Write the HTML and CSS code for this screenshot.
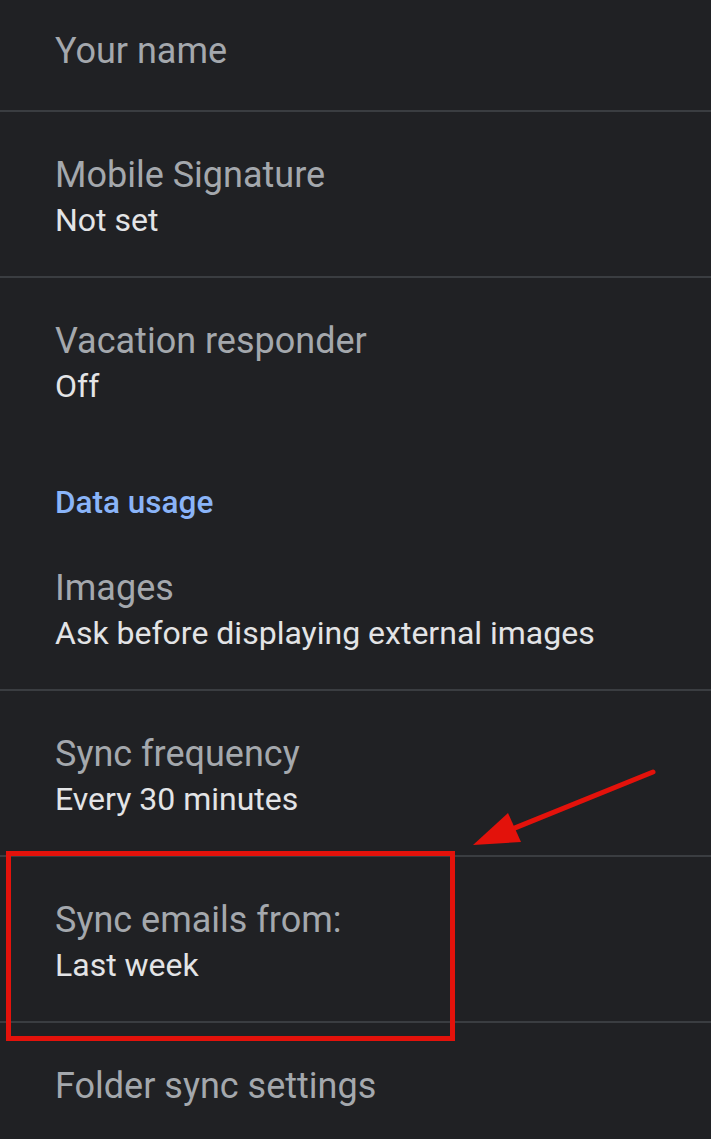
FILE: index.html
```html
<html lang="en">
<head>
<meta charset="utf-8">
<title>Settings</title>
<link rel="stylesheet" href="styles.css">
</head>
<body>
<div class="list">
  <div class="item first">
    <div class="title">Your name</div>
  </div>
  <div class="item">
    <div class="title">Mobile Signature</div>
    <div class="sub">Not set</div>
  </div>
  <div class="item last">
    <div class="title">Vacation responder</div>
    <div class="sub">Off</div>
  </div>

  <div class="header">Data usage</div>

  <div class="item">
    <div class="title">Images</div>
    <div class="sub">Ask before displaying external images</div>
  </div>
  <div class="item">
    <div class="title">Sync frequency</div>
    <div class="sub">Every 30 minutes</div>
  </div>
  <div class="item">
    <div class="title">Sync emails from:</div>
    <div class="sub">Last week</div>
  </div>
  <div class="item last">
    <div class="title">Folder sync settings</div>
  </div>
</div>

<!-- annotation drawn over the screenshot -->
<div class="mark-box"></div>
<svg class="mark-arrow" width="711" height="1139" viewBox="0 0 711 1139">
  <line x1="653" y1="772" x2="505" y2="832" stroke="#e3120b" stroke-width="5" stroke-linecap="round"/>
  <polygon points="473,845 508,813 521,842" fill="#e3120b"/>
</svg>
</body>
</html>
```

FILE: styles.css
```css
body{margin:0; padding:0; background-color:#202124; font-family:Roboto, "Noto Sans", sans-serif; height:1139px; overflow:hidden; position:relative;}

.list{display:flex; flex-direction:column;}

.item{padding:41px 20px 33px 55px; border-bottom:2px solid #3a3d41;}
.item.first{padding-top:29px; padding-bottom:37px;}
.item.last{border-bottom:none;}

.title{font-size:36px; line-height:44px; color:#a4a8ad;}
.sub{font-size:32px; line-height:46px; color:#e3e4e6;}

.header{padding:41px 20px 2px 55px; font-size:31.5px; line-height:40px; font-weight:500; color:#8ab4f8;}

/*--annotation--*/
.mark-box{position:absolute; left:6px; top:851px; width:439px; height:180px; border:5px solid #e3120b;}
.mark-arrow{position:absolute; left:0; top:0;}
```
